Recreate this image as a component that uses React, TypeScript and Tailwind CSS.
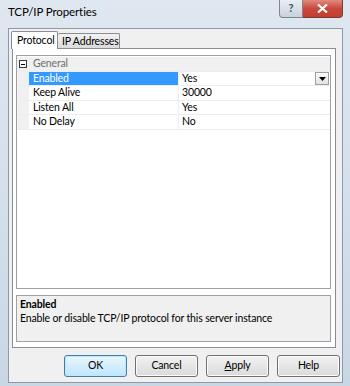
import React from "react";

const font = { fontFamily: 'Lato, "Noto Sans", sans-serif' };

function Row({ name, value, selected, h, dropdown }: { name: string; value: string; selected?: boolean; h: string; dropdown?: boolean }) {
  return (
    <div className={`flex ${h} border-b border-[#ededed]`}>
      <div className="w-[12px] bg-[#f0f0f0] shrink-0" />
      <div className={`w-[150px] shrink-0 flex items-center pl-[4px] border-r border-[#ededed] ${selected ? "bg-[#3399ff] text-white" : "text-black"}`}>
        {name}
      </div>
      <div className="flex-1 flex items-center pl-[3px] relative">
        <span>{value}</span>
        {dropdown && (
          <div className="ml-auto mr-[1px] w-[14px] h-[13px] border border-[#a0a0a0] bg-gradient-to-b from-[#fafafa] to-[#e2e2e2] flex items-center justify-center">
            <svg width="7" height="4" viewBox="0 0 7 4"><path d="M0 0h7L3.5 4z" fill="#000" /></svg>
          </div>
        )}
      </div>
    </div>
  );
}

function Btn({ children, primary }: { children: React.ReactNode; primary?: boolean }) {
  return (
    <div
      className={`w-[63px] h-[22px] rounded-[3px] border flex items-center justify-center text-[10.5px] tracking-[-0.15px] text-black ${
        primary
          ? "border-[#3c7fb1] bg-gradient-to-b from-[#eaf6fd] to-[#bee6fd] shadow-[inset_0_0_0_1px_#c4e5f6]"
          : "border-[#707070] bg-gradient-to-b from-[#f2f2f2] to-[#dadada] shadow-[inset_0_0_0_1px_#fcfcfc]"
      }`}
    >
      {children}
    </div>
  );
}

export default function App() {
  return (
    <div className="w-[350px] h-[386px] bg-gradient-to-b from-[#dfe8f1] to-[#c9d7e5] flex flex-col overflow-hidden" style={font}>
      {/* title bar */}
      <div className="h-[28px] flex items-start shrink-0">
        <div className="pl-[8px] pt-[4px] text-[11.5px] tracking-[-0.1px] text-black leading-[16px]">TCP/IP Properties</div>
        <div className="ml-auto mr-[7px] flex">
          <div className="w-[24px] h-[18px] border border-[#7a8797] border-t-0 rounded-bl-[4px] bg-gradient-to-b from-[#e9eef3] to-[#c7d1dc] flex items-center justify-center text-[11px] text-[#3d4a5a] font-bold">?</div>
          <div className="w-[40px] h-[18px] border border-[#7b3a34] border-t-0 border-l-0 rounded-br-[4px] bg-gradient-to-b from-[#e08a7e] via-[#c9483b] to-[#c43e30] flex items-center justify-center">
            <svg width="11" height="9" viewBox="0 0 11 9"><path d="M1 0.5L10 8.5M10 0.5L1 8.5" stroke="#fff" strokeWidth="2.2" /></svg>
          </div>
        </div>
      </div>
      {/* window body */}
      <div className="ml-[8px] mr-[7px] mb-[3px] flex-1 border border-[#8e9aa8] bg-[#f0f0f0] flex flex-col text-[10.5px] tracking-[-0.15px]">
        {/* tabs */}
        <div className="flex items-end h-[19px] pl-[2px] mt-[1px] relative z-10">
          <div className="w-[47px] h-[18px] border border-[#898c95] border-b-0 bg-white rounded-t-[2px] pl-[5px] leading-[16px] text-black whitespace-nowrap">Protocol</div>
          <div className="w-[62px] h-[15px] border border-[#898c95] border-l-0 border-b-0 bg-gradient-to-b from-[#f2f2f2] to-[#dbdbdb] rounded-t-[2px] pl-[4px] leading-[15px] text-black mb-[1px] whitespace-nowrap">IP Addresses</div>
        </div>
        {/* panel */}
        <div className="ml-[3px] mr-[6px] -mt-[1px] h-[300px] border border-[#898c95] bg-white flex flex-col px-[3px] pt-[6px]">
          {/* grid */}
          <div className="mr-[1px] h-[234px] border border-[#a0a0a0] bg-white flex flex-col">
            <div className="flex h-[15px] mt-[1px] border-b border-[#ededed]">
              <div className="w-[12px] bg-[#f0f0f0] flex items-center justify-center shrink-0">
                <div className="w-[8px] h-[8px] border border-[#3a3a3a] bg-white flex items-center justify-center">
                  <div className="w-[4px] h-[1px] bg-black" />
                </div>
              </div>
              <div className="flex-1 bg-[#f0f0f0] pl-[4px] flex items-center text-[#6d6d6d]">General</div>
            </div>
            <Row name="Enabled" value="Yes" selected h="h-[14px]" dropdown />
            <Row name="Keep Alive" value="30000" h="h-[15px]" />
            <Row name="Listen All" value="Yes" h="h-[14px]" />
            <Row name="No Delay" value="No" h="h-[15px]" />
          </div>
          {/* description */}
          <div className="mt-[6px] mr-[1px] h-[47px] border border-[#a0a0a0] bg-[#f0f0f0] px-[3px] pt-[1px] text-black leading-[14px]">
            <div className="font-bold">Enabled</div>
            <div className="whitespace-nowrap">Enable or disable TCP/IP protocol for this server instance</div>
          </div>
        </div>
        {/* buttons */}
        <div className="flex gap-[8px] pl-[55px] mt-[7px]">
          <Btn primary>OK</Btn>
          <Btn>Cancel</Btn>
          <Btn><span><span className="underline">A</span>pply</span></Btn>
          <Btn>Help</Btn>
        </div>
      </div>
    </div>
  );
}
